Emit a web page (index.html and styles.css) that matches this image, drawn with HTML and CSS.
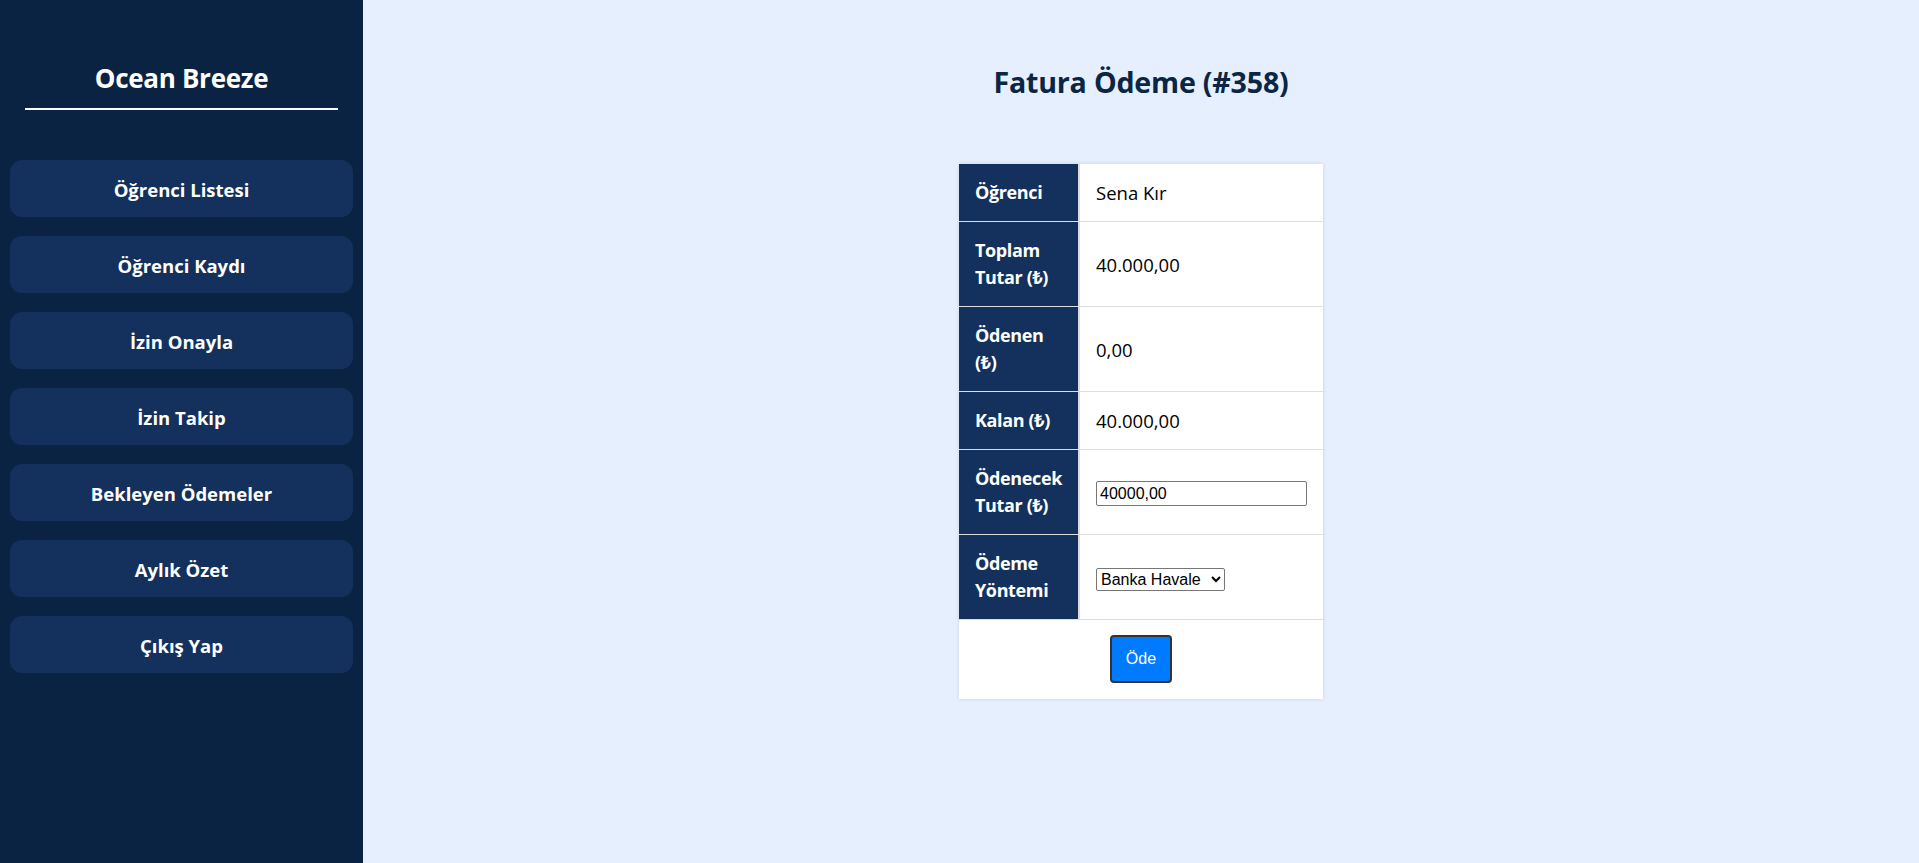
FILE: index.html
```html
<!DOCTYPE html>
<html lang="tr">
<head>
<meta charset="utf-8">
<title>Fatura Ödeme</title>
<link rel="stylesheet" href="styles.css">
</head>
<body>
<aside class="sidebar">
  <div class="brand">Ocean Breeze</div>
  <nav class="nav">
    <a class="nav-btn" href="#">Öğrenci Listesi</a>
    <a class="nav-btn" href="#">Öğrenci Kaydı</a>
    <a class="nav-btn" href="#">İzin Onayla</a>
    <a class="nav-btn" href="#">İzin Takip</a>
    <a class="nav-btn" href="#">Bekleyen Ödemeler</a>
    <a class="nav-btn" href="#">Aylık Özet</a>
    <a class="nav-btn" href="#">Çıkış Yap</a>
  </nav>
</aside>
<main class="main">
  <h1 class="page-title">Fatura Ödeme (#358)</h1>
  <table class="pay-table">
    <tr><th>Öğrenci</th><td>Sena Kır</td></tr>
    <tr><th>Toplam Tutar (₺)</th><td>40.000,00</td></tr>
    <tr><th>Ödenen (₺)</th><td>0,00</td></tr>
    <tr><th>Kalan (₺)</th><td>40.000,00</td></tr>
    <tr><th>Ödenecek Tutar (₺)</th><td><input class="amount" type="text" value="40000,00"></td></tr>
    <tr><th>Ödeme Yöntemi</th><td><select class="method"><option>Banka Havale</option><option>Kredi Kartı</option><option>Nakit</option></select></td></tr>
    <tr><td class="action" colspan="2"><button class="pay-btn" type="button">Öde</button></td></tr>
  </table>
</main>
</body>
</html>
```
FILE: styles.css
```css
html, body {
  margin: 0;
  padding: 0;
  height: 100%;
}
body {
  display: flex;
  font-family: "Open Sans", "Noto Sans", sans-serif;
  background: #e6effd;
  overflow: hidden;
}
.sidebar {
  width: 363px;
  flex: none;
  height: 100vh;
  background: #0b2343;
  box-sizing: border-box;
  padding: 58px 10px 0;
  display: flex;
  flex-direction: column;
}
.brand {
  margin: 0 15px;
  color: #fff;
  font-weight: 700;
  font-size: 26px;
  line-height: 40px;
  text-align: center;
  padding-bottom: 10px;
  border-bottom: 2px solid #fff;
  letter-spacing: -0.3px;
}
.nav {
  margin-top: 50px;
  display: flex;
  flex-direction: column;
  gap: 19px;
}
.nav-btn {
  display: flex;
  align-items: center;
  justify-content: center;
  height: 57px;
  border-radius: 12px;
  background: #13315c;
  color: #fff;
  text-decoration: none;
  font-weight: 700;
  font-size: 18.5px;
  padding-top: 1px;
  box-sizing: border-box;
}
.main {
  flex: 1;
  display: flex;
  flex-direction: column;
  align-items: center;
  padding-top: 60px;
}
.page-title {
  margin: 0;
  color: #0b2545;
  font-size: 28.6px;
  line-height: 44px;
  font-weight: 700;
  letter-spacing: -0.2px;
}
.pay-table {
  margin-top: 60px;
  width: 364px;
  border-collapse: collapse;
  background: #fff;
  box-shadow: 0 0 4px rgba(0, 0, 0, 0.12);
  font-size: 18.5px;
  line-height: 27px;
}
.pay-table th,
.pay-table td {
  padding: 15px 16px;
  border-bottom: 1px solid #dddddd;
  text-align: left;
  vertical-align: middle;
}
.pay-table tr:last-child td {
  border-bottom: none;
}
.pay-table th {
  width: 89px;
  background: #13315c;
  color: #fff;
  font-weight: 700;
  font-size: 18px;
  border-right: 2px solid #dddddd;
  letter-spacing: -0.35px;
}
.pay-table td {
  color: #000;
}
.amount {
  width: 211px;
  height: 25px;
  box-sizing: border-box;
  font-family: "Liberation Sans", Arial, sans-serif;
  font-size: 16px;
  padding: 1px 3px;
  border: 1px solid #767676;
  border-radius: 2px;
  color: #000;
}
.method {
  width: 129px;
  height: 23px;
  font-family: "Liberation Sans", Arial, sans-serif;
  font-size: 16px;
  border: 1px solid #767676;
  border-radius: 2px;
  background: #fff;
  color: #000;
}
.action {
  text-align: center !important;
  padding: 15px 16px 16px !important;
}
.pay-btn {
  background: #007bff;
  color: #fff;
  font-family: "Liberation Sans", Arial, sans-serif;
  font-size: 16px;
  padding: 13px 14px;
  border: 2px solid #333;
  border-radius: 4px;
  line-height: 18px;
}
```
